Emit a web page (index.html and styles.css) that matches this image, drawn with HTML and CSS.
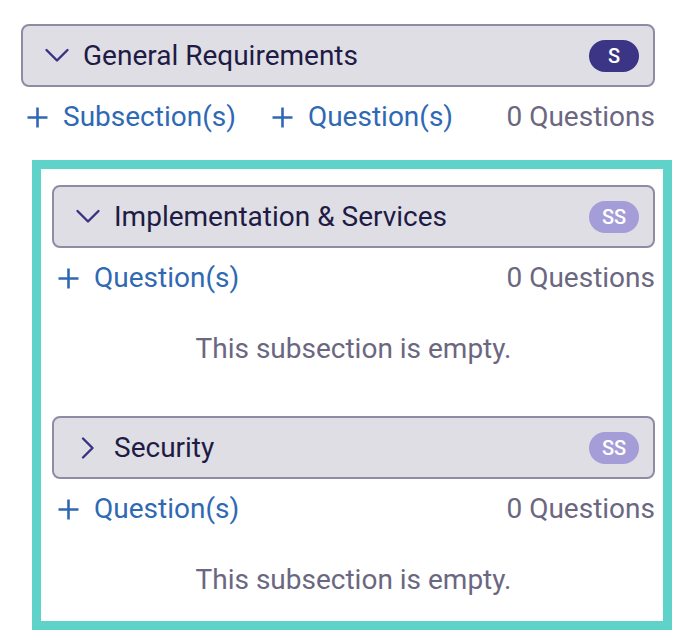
FILE: index.html
```html
<!DOCTYPE html>
<html>
<head>
<meta charset="utf-8">
<link rel="stylesheet" href="styles.css">
</head>
<body>
<div class="page">
  <div class="hdr top">
    <svg class="chev" viewBox="0 0 24 24" width="24" height="24"><path d="M1.5 6 L12 16.5 L22.5 6" fill="none" stroke="#3a3282" stroke-width="2.4" stroke-linecap="round" stroke-linejoin="round"/></svg>
    <span class="title">General Requirements</span>
    <span class="badge dark">S</span>
  </div>
  <div class="actions top">
    <span class="add"><svg class="plus" viewBox="0 0 21 21" width="21" height="21"><path d="M10.5 0.5 V20.5 M0.5 10.5 H20.5" stroke="#2f69b3" stroke-width="2.6" fill="none"/></svg>Subsection(s)</span>
    <span class="add"><svg class="plus" viewBox="0 0 21 21" width="21" height="21"><path d="M10.5 0.5 V20.5 M0.5 10.5 H20.5" stroke="#2f69b3" stroke-width="2.6" fill="none"/></svg>Question(s)</span>
    <span class="count">0 Questions</span>
  </div>
  <div class="subs">
    <div class="sub">
      <div class="hdr">
        <svg class="chev" viewBox="0 0 24 24" width="24" height="24"><path d="M1.5 6 L12 16.5 L22.5 6" fill="none" stroke="#3a3282" stroke-width="2.4" stroke-linecap="round" stroke-linejoin="round"/></svg>
        <span class="title">Implementation &amp; Services</span>
        <span class="badge light">SS</span>
      </div>
      <div class="actions">
        <span class="add"><svg class="plus" viewBox="0 0 21 21" width="21" height="21"><path d="M10.5 0.5 V20.5 M0.5 10.5 H20.5" stroke="#2f69b3" stroke-width="2.6" fill="none"/></svg>Question(s)</span>
        <span class="count">0 Questions</span>
      </div>
      <div class="empty">This subsection is empty.</div>
    </div>
    <div class="sub">
      <div class="hdr">
        <svg class="chev" viewBox="0 0 24 24" width="24" height="24"><path d="M7 2.5 L16.5 12 L7 21.5" fill="none" stroke="#3a3282" stroke-width="2.4" stroke-linecap="round" stroke-linejoin="round"/></svg>
        <span class="title">Security</span>
        <span class="badge light">SS</span>
      </div>
      <div class="actions">
        <span class="add"><svg class="plus" viewBox="0 0 21 21" width="21" height="21"><path d="M10.5 0.5 V20.5 M0.5 10.5 H20.5" stroke="#2f69b3" stroke-width="2.6" fill="none"/></svg>Question(s)</span>
        <span class="count">0 Questions</span>
      </div>
      <div class="empty">This subsection is empty.</div>
    </div>
  </div>
</div>
</body>
</html>
```
FILE: styles.css
```css
* { box-sizing: border-box; }
html, body { margin: 0; padding: 0; background: #ffffff; }
body {
  font-family: Roboto, "Liberation Sans", sans-serif;
  font-size: 28px;
  width: 680px;
  height: 642px;
  overflow: hidden;
}
.page {
  padding: 24px 8px 0 21px;
}
.hdr {
  display: flex;
  align-items: center;
  height: 63px;
  background: #dfdee4;
  border: 2px solid #8f8ba4;
  border-radius: 8px;
  padding: 0 14px 0 22px;
}
.hdr.top { margin-right: 17px; }
.chev { flex: none; overflow: visible; }
.title {
  margin-left: 14px;
  color: #1e1b44;
  flex: 1;
  line-height: 34px;
}
.badge {
  flex: none;
  width: 50px;
  height: 32px;
  border-radius: 16px;
  display: flex;
  align-items: center;
  justify-content: center;
  color: #ffffff;
  font-size: 20px;
  font-weight: 500;
}
.badge.dark { background: #3c3484; }
.badge.light { background: #a49dd7; }
.actions {
  display: flex;
  align-items: center;
  margin-top: 13px;
  line-height: 34px;
}
.actions.top { margin-right: 17px; }
.add {
  color: #2f69b3;
  display: flex;
  align-items: center;
  margin-right: 30px;
}
.plus {
  flex: none;
  margin: 0 15px 0 6px;
}
.count {
  margin-left: auto;
  color: #6b6781;
}
.subs {
  margin: 26px 0 0 11px;
  border: 9px solid #5fd2c9;
  padding: 16px 8px 24px 11px;
}
.sub + .sub { margin-top: 50px; }
.empty {
  margin-top: 37px;
  text-align: center;
  color: #6b6781;
  line-height: 34px;
}
```
